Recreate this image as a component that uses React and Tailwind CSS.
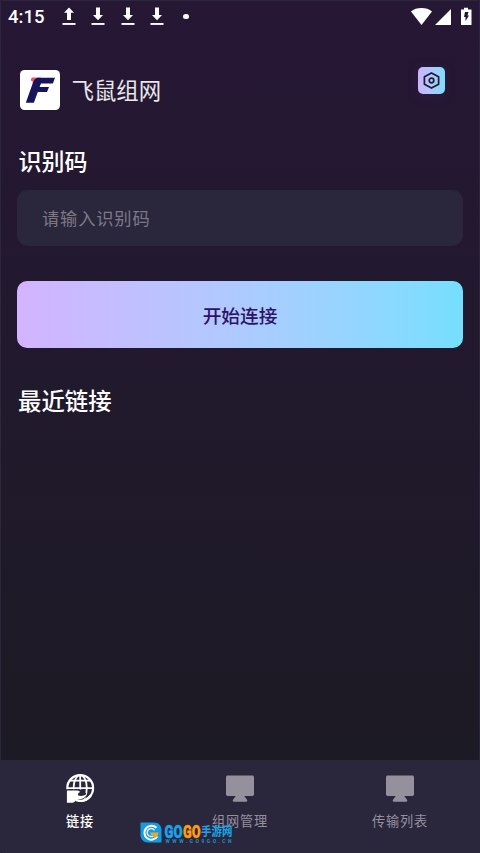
const tabs = [
  { name: "链接", icon: GlobeIcon, active: true },
  { name: "组网管理", icon: MonitorIcon },
  { name: "传输列表", icon: MonitorIcon },
];

function TransferIcon({ up }) {
  return (
    <svg width="14" height="20" viewBox="0 0 14 20" className="text-white">
      <path
        d={up ? "M7 .5 12 5.700H9V13H5V5.700H2Z" : "M7 13.300 2 8H5V.500H9V8H12Z"}
        fill="currentColor"
      />
      <rect x="0.500" y="16" width="13" height="1.900" fill="currentColor" />
    </svg>
  );
}

function GlobeIcon() {
  return (
    <svg width="30" height="30" viewBox="0 0 30 30" fill="none">
      <g stroke="#fff" strokeWidth="1.800">
        <circle cx="15.200" cy="15" r="12.900" strokeWidth="2.200" />
        <ellipse cx="15.200" cy="15" rx="6.600" ry="12.800" />
        <path d="M15.200 2v17M2.500 15.200h25.500M5 7.600h20.500" />
      </g>
      {/* hand in front of the globe */}
      <path d="M0 16.300H15l4 2.500c-3 .4-3.500 1-3.200 2 2 .6 3.500.2 5.200-1.200v4l-3 3.200-5 1V30H0Z" fill="#2a263c" />
      <path
        d="M2.500 17.500H13l2.300 1.500c-2 .5-2.700 1.800-2.100 3.500 2.800 1 5.800.5 8.500-1.500-1 3.500-4.200 5.200-8 5.400l-2.700 1-2.100 1.800c-1.500.8-3.500.5-7 .5V18.300c0-.5.200-.8.600-.8Z"
        fill="#fff"
      />
      <path d="M11 27.300c5.900 1.600 11.500-.5 14.800-4.800" stroke="#fff" strokeWidth="2.200" />
    </svg>
  );
}

function MonitorIcon() {
  return (
    <svg width="30" height="30" viewBox="0 0 30 30" fill="#95909e">
      <path d="M2.700 2.500h24.600c1 0 1.700.7 1.700 1.700v17.100c0 1-.7 1.700-1.700 1.700h-8l2.500 3.500c1 1.300.6 2.200-.7 2.200H9c-1.400 0-1.800-.9-.8-2.200l2.500-3.500h-8c-1 0-1.700-.7-1.700-1.700V4.200C1 3.200 1.700 2.500 2.700 2.500Z" />
    </svg>
  );
}

function StatusBar() {
  return (
    <div className="flex h-[31px] items-center justify-between pl-[7px] pr-[7px] text-white">
      <div className="flex items-center">
        <span className="w-[54px] font-[Roboto] text-[18.500px] font-medium leading-8">4:15</span>
        <div className="flex gap-[15.300px]">
          <TransferIcon up />
          <TransferIcon />
          <TransferIcon />
          <TransferIcon />
        </div>
        <span className="ml-[19.500px] size-[5.500px] rounded-full bg-white" />
      </div>
      <svg width="61" height="20" viewBox="0 0 61 20" fill="#fff">
        <path d="M0 4.500C5-.100 16-.100 21 4.500L10.500 18Z" />
        <path d="M40 2v16H24Z" />
        <path d="M53 .800h4v1.700h3.500V18H50V2.500h3Z" />
        <path d="M54 5h3.500l-1 3.500H58L54.500 14v-4H53Z" fill="#251733" />
      </svg>
    </div>
  );
}

function AppLogo() {
  return (
    <svg width="40" height="40" viewBox="0 0 40 40">
      <rect width="40" height="40" rx="4.500" fill="#fff" />
      <path d="M11 9.500c0-1.400.8-1.900 2-1.900h8L16 13h-3.200c0-1.500-.4-2.200-1.800-2.200Z" fill="#f4516c" />
      <path
        d="M18 7.800H35l-2.100 5.700H21l-1.400 3.600H29l-2 5H17.800l-3.900 10.700H5.800l6.500-18.200c1.400-4.300 2.700-6.200 5.700-6.800Z"
        fill="#17145a"
      />
    </svg>
  );
}

function SettingsButton() {
  return (
    <button className="flex size-[27px] items-center justify-center rounded-[5px] bg-linear-to-r from-[#cdb3fb] to-[#7cdcfd] shadow-[0_2px_8px_#2d1b45]">
      <svg width="17" height="17" viewBox="0 0 17 17" fill="none" stroke="#211a30" strokeWidth="1.700" strokeLinejoin="round">
        <path d="M8.500.900 15.600 4.700V12.300L8.500 16.100 1.400 12.300V4.700Z" />
        <circle cx="8.500" cy="8.500" r="2.300" />
      </svg>
    </button>
  );
}

function Watermark() {
  return (
    <div className="absolute left-[139px] top-[821px] flex gap-[2px]">
      <svg width="22" height="21" viewBox="0 0 22 21" fill="none">
        <path d="M.500.500H14C18.500.500 21.500 4 21.500 8V20.500H8C3.500 20.500.500 17 .500 13Z" fill="#159be0" />
        <path d="M16.500 5.800A7 7 0 1 0 17.300 14.500" stroke="#fff" strokeWidth="2" />
        <path d="M14.500 8.300A4 4 0 1 0 13.500 13.800" stroke="#d9f3ff" strokeWidth="1.500" />
        <path d="M10 10.500h8.500c0 2.800-1.800 5-4.600 6l.1-3.500h-3Z" fill="#f9a51b" />
      </svg>
      <svg width="70" height="23" viewBox="0 0 70 23" className="overflow-visible" fontFamily="Roboto, sans-serif">
        <g fontSize="19" fontWeight="900" strokeWidth="0.500">
          <text x="0.500" y="16" textLength="18" lengthAdjust="spacingAndGlyphs" fill="#1ba4e8" stroke="#1ba4e8">GO</text>
          <text x="19" y="16" textLength="17.500" lengthAdjust="spacingAndGlyphs" fill="#ff9d12" stroke="#ff9d12">GO</text>
        </g>
        <text x="37" y="14.300" fontFamily="'Noto Sans CJK SC', sans-serif" fontSize="12.500" fontWeight="700" textLength="31.500" lengthAdjust="spacingAndGlyphs" fill="#1ba4e8">
          手游网
        </text>
        <text x="1.500" y="21" fontSize="5" fontWeight="700" textLength="66" fill="#238fc8">
          WWW.GO9GO.CN
        </text>
      </svg>
    </div>
  );
}

export default function App() {
  return (
    <div className="relative flex h-[853px] w-[480px] flex-col overflow-hidden border-x border-t border-[#2b263b] bg-linear-to-b from-[#261735] to-[#1c1a24] to-[760px] font-['Noto_Sans_CJK_SC',sans-serif]">
      <StatusBar />

      <header className="mt-[35px] flex h-[46px] items-start justify-between pl-[19px] pr-[34px]">
        <div className="flex items-center gap-[11.500px] pt-[3px]">
          <AppLogo />
          <h1 className="-mt-[2px] text-[22.400px] leading-10 text-white/90">飞鼠组网</h1>
        </div>
        <SettingsButton />
      </header>

      <main className="flex flex-1 flex-col px-4">
        <h2 className="mt-[31px] pl-[1.500px] text-[23px] font-medium leading-8 text-white">识别码</h2>
        <input
          className="mt-[14px] h-[56px] rounded-[11px] bg-[#2a263c] pb-[2px] pl-[25px] text-[17.300px] tracking-[0.800px] outline-none placeholder:text-[#7d7884]"
          placeholder="请输入识别码"
        />
        <button className="mt-[35px] h-[67px] rounded-[10px] bg-linear-to-r from-[#d3b3ff] to-[#75dffe] pt-[2px] text-[18.700px] font-medium text-[#2f1268]">
          开始连接
        </button>
        <h2 className="mt-9 pl-px text-[23.400px] font-medium leading-8 text-white">最近链接</h2>
      </main>

      <nav className="-mx-px grid h-[93px] grid-cols-3 rounded-bl-[4px] bg-[#2a263c]">
        {tabs.map(({ name, icon: Icon, active }) => (
          <button key={name} className="flex flex-col items-center pt-[13px]">
            <Icon />
            <span
              className={`mt-2 text-[13.200px] leading-5 tracking-[0.800px] ${
                active ? "font-medium text-white" : "text-[#95909e]"
              }`}
            >
              {name}
            </span>
          </button>
        ))}
      </nav>

      <Watermark />
    </div>
  );
}
